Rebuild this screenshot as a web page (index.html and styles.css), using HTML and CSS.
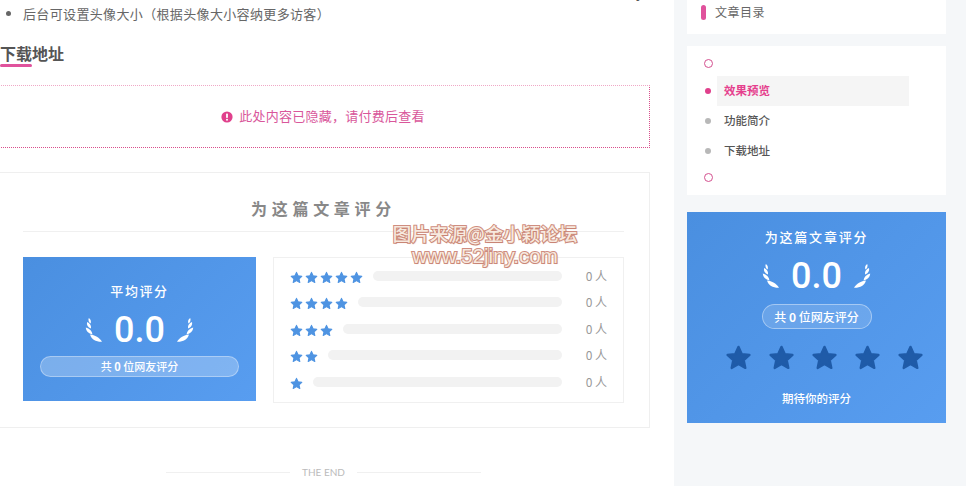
FILE: index.html
```html
<!DOCTYPE html>
<html lang="zh-CN">
<head>
<meta charset="utf-8">
<title>下载地址</title>
<link rel="stylesheet" href="styles.css">
</head>
<body>
<svg class="defs" width="0" height="0" aria-hidden="true">
  <symbol id="star" viewBox="0 0 24 24">
    <polygon points="12,2.5 14.9,8.9 21.8,9.7 16.7,14.4 18.1,21.3 12,17.8 5.9,21.3 7.3,14.4 2.2,9.7 9.1,8.9" fill="currentColor" stroke="currentColor" stroke-width="2" stroke-linejoin="round"/>
  </symbol>
  <symbol id="laurel" viewBox="0 0 17 24">
    <path fill="#fff" d="M17 23.8C11 24 6.5 21.5 5 16.5 10 17 14.5 19.5 17 23.8Z"/>
    <path fill="#fff" d="M7.5 16.5C3.5 15.5 1 13 .8 9.5 4.5 10.5 7 13 7.5 16.5Z"/>
    <path fill="#fff" d="M6 10.5C3 9.5 1.4 7 2 4 4.8 5 6.4 7.5 6 10.5Z"/>
    <path fill="#fff" d="M5.6 5.5C3.6 4.3 3 2.2 3.8 0 5.6 1.2 6.4 3.3 5.6 5.5Z"/>
  </symbol>
</svg>
<div class="page">
  <main class="main">
    <p class="prev-line">y</p>
    <ul class="features">
      <li>后台可设置头像大小（根据头像大小容纳更多访客）</li>
    </ul>
    <h2 class="section-title">下载地址</h2>
    <div class="hidden-box">
      <svg class="alert-icon" viewBox="0 0 12 12" aria-hidden="true">
        <circle cx="6" cy="6" r="5.6" fill="#e0408c"/>
        <rect x="5.1" y="2.4" width="1.8" height="4.6" rx=".7" fill="#fff"/>
        <circle cx="6" cy="8.8" r="1" fill="#fff"/>
      </svg>
      <span>此处内容已隐藏，请付费后查看</span>
    </div>
    <section class="rate-card">
      <h3 class="rate-title">为这篇文章评分</h3>
      <div class="rate-body">
        <div class="score-box">
          <div class="score-label">平均评分</div>
          <div class="score-row">
            <svg class="laurel"><use href="#laurel"/></svg>
            <span class="score-num">0.0</span>
            <svg class="laurel flip"><use href="#laurel"/></svg>
          </div>
          <div class="score-pill">共 <b>0</b> 位网友评分</div>
        </div>
        <div class="rate-list">
          <div class="rate-row">
            <span class="mini-stars"><svg><use href="#star"/></svg><svg><use href="#star"/></svg><svg><use href="#star"/></svg><svg><use href="#star"/></svg><svg><use href="#star"/></svg></span>
            <span class="bar"></span><span class="count">0 人</span>
          </div>
          <div class="rate-row">
            <span class="mini-stars"><svg><use href="#star"/></svg><svg><use href="#star"/></svg><svg><use href="#star"/></svg><svg><use href="#star"/></svg></span>
            <span class="bar"></span><span class="count">0 人</span>
          </div>
          <div class="rate-row">
            <span class="mini-stars"><svg><use href="#star"/></svg><svg><use href="#star"/></svg><svg><use href="#star"/></svg></span>
            <span class="bar"></span><span class="count">0 人</span>
          </div>
          <div class="rate-row">
            <span class="mini-stars"><svg><use href="#star"/></svg><svg><use href="#star"/></svg></span>
            <span class="bar"></span><span class="count">0 人</span>
          </div>
          <div class="rate-row">
            <span class="mini-stars"><svg><use href="#star"/></svg></span>
            <span class="bar"></span><span class="count">0 人</span>
          </div>
        </div>
      </div>
    </section>
    <div class="the-end"><i></i><span>THE END</span><i></i></div>
  </main>
  <aside class="side">
    <div class="card toc-head"><span class="toc-mark"></span><span class="toc-label">文章目录</span></div>
    <div class="card toc">
      <div class="toc-edge"><span class="ring"></span></div>
      <div class="toc-item active"><span class="dot"></span><span class="toc-text">效果预览</span></div>
      <div class="toc-item"><span class="dot"></span><span class="toc-text">功能简介</span></div>
      <div class="toc-item"><span class="dot"></span><span class="toc-text">下载地址</span></div>
      <div class="toc-edge last"><span class="ring"></span></div>
    </div>
    <div class="side-rate">
      <div class="side-title">为这篇文章评分</div>
      <div class="score-row side-score">
        <svg class="laurel"><use href="#laurel"/></svg>
        <span class="score-num">0.0</span>
        <svg class="laurel flip"><use href="#laurel"/></svg>
      </div>
      <div class="side-pill">共 <b>0</b> 位网友评分</div>
      <div class="big-stars"><svg><use href="#star"/></svg><svg><use href="#star"/></svg><svg><use href="#star"/></svg><svg><use href="#star"/></svg><svg><use href="#star"/></svg></div>
      <div class="side-note">期待你的评分</div>
    </div>
  </aside>
</div>
<div class="watermark">
  <div class="wm-cn">图片来源@金小颖论坛</div>
  <div class="wm-en">www.52jiny.com</div>
</div>
</body>
</html>
```

FILE: styles.css
```css
* { box-sizing: border-box; }
html, body { margin: 0; padding: 0; }
body {
  position: relative;
  width: 966px;
  height: 486px;
  overflow: hidden;
  font-family: "Noto Sans CJK SC", "Noto Sans", sans-serif;
  color: #555;
}
.defs { position: absolute; }
.page {
  display: flex;
  width: 966px;
  height: 486px;
  overflow: hidden;
  background: #f5f7f9;
}
.main {
  flex: 0 0 674px;
  height: 520px;
  margin-top: -19px;
  padding-right: 24px;
  background: #fff;
}
.prev-line {
  margin: 0;
  height: 22px;
  padding-right: 6px;
  text-align: right;
  font: 16px/24px "Liberation Sans", sans-serif;
  color: #555;
}
.features {
  margin: 0;
  padding: 0 0 0 23px;
  font-size: 13px;
  line-height: 22px;
  letter-spacing: .35px;
  color: #666;
}
.section-title {
  position: relative;
  margin: 16px 0 0;
  font-size: 16px;
  line-height: 24px;
  font-weight: 700;
  color: #555;
}
.section-title::after {
  content: "";
  position: absolute;
  left: 0;
  top: 23px;
  width: 32px;
  height: 3px;
  border-radius: 2px;
  background: #e0529c;
}
.hidden-box {
  display: flex;
  align-items: center;
  justify-content: center;
  gap: 6px;
  height: 63px;
  margin: 20px 0 0 -4px;
  padding-bottom: 2px;
  border: 1px dotted #d94f8c;
  border-top-color: #f0a8c6;
  font-size: 13px;
  letter-spacing: .25px;
  color: #d9579b;
}
.alert-icon { width: 12px; height: 12px; flex: none; margin-top: 2px; }
.rate-card {
  height: 256px;
  margin: 24px 0 0 -4px;
  padding: 23px 25px 0 26px;
  border: 1px solid #efefef;
}
.rate-title {
  margin: 0;
  height: 36px;
  border-bottom: 1px solid #f0f0f0;
  font-size: 16px;
  line-height: 24px;
  font-weight: 700;
  letter-spacing: 4.7px;
  text-align: center;
  color: #888;
}
.rate-body {
  display: flex;
  align-items: flex-start;
  gap: 17px;
  margin-top: 25px;
}
.score-box {
  flex: 0 0 233px;
  height: 144px;
  padding: 24px 17px 0;
  background: linear-gradient(135deg, #4a8fe0, #589df0);
  color: #fff;
  text-align: center;
}
.score-label {
  font-size: 13px;
  font-weight: 500;
  line-height: 20px;
  letter-spacing: 1.6px;
}
.score-row {
  display: flex;
  align-items: center;
  justify-content: center;
  gap: 12px;
  height: 40px;
  margin-top: 9px;
}
.score-num {
  font: 500 36px/40px Roboto, sans-serif;
  color: #fff;
}
.laurel { width: 17px; height: 24px; }
.flip { transform: scaleX(-1); }
.score-pill {
  height: 21px;
  margin-top: 6px;
  border: 1px solid rgba(255, 255, 255, .35);
  border-radius: 11px;
  background: rgba(255, 255, 255, .25);
  font-size: 11px;
  font-weight: 500;
  line-height: 19px;
}
.rate-list {
  flex: 0 0 351px;
  height: 146px;
  padding: 5px 16px 0;
  border: 1px solid #f0f0f0;
}
.rate-row {
  display: flex;
  align-items: center;
  gap: 10px;
  height: 26.5px;
}
.mini-stars {
  display: flex;
  gap: 2px;
  padding-top: 2px;
  color: #4f94e2;
}
.mini-stars svg { width: 13px; height: 13px; }
.bar {
  flex: 1;
  height: 10px;
  margin-top: -1px;
  border-radius: 5px;
  background: #f2f2f2;
}
.count {
  flex: 0 0 19px;
  margin-left: 14px;
  margin-top: -2px;
  font-size: 12px;
  white-space: nowrap;
  color: #999;
}
.the-end {
  display: flex;
  align-items: center;
  justify-content: center;
  gap: 12px;
  width: 647px;
  margin-top: 36px;
  font: 400 10px/16px Lato, sans-serif;
  color: #bbb;
}
.the-end i {
  width: 124px;
  height: 1px;
  background: #f0f0f0;
}
.side {
  flex: 0 0 292px;
  margin-top: -10px;
  padding: 0 20px 0 13px;
}
.card { background: #fff; }
.toc-head {
  display: flex;
  align-items: center;
  gap: 9px;
  height: 44px;
  padding-left: 14px;
  font-size: 12px;
  letter-spacing: .5px;
  color: #666;
}
.toc-label { margin-top: -2px; }
.toc-mark {
  width: 5px;
  height: 15px;
  border-radius: 3px;
  background: #e0529c;
}
.toc {
  height: 149px;
  margin-top: 12px;
  padding: 4px 0;
}
.toc-edge {
  display: flex;
  align-items: center;
  height: 26px;
  padding-left: 17px;
}
.toc-edge.last { height: 23px; }
.ring {
  width: 9px;
  height: 9px;
  border: 1.5px solid #d4508f;
  border-radius: 50%;
}
.toc-item {
  display: flex;
  align-items: center;
  height: 30px;
  padding-left: 18px;
  font-size: 11.5px;
  font-weight: 500;
  color: #555;
}
.dot {
  width: 6px;
  height: 6px;
  border-radius: 50%;
  background: #b8b8b8;
}
.toc-text {
  display: flex;
  align-items: center;
  width: 192px;
  height: 30px;
  margin-left: 6px;
  padding: 0 0 2px 7px;
}
.active { color: #e5408d; font-weight: 700; }
.active .dot { background: #e0408c; }
.active .toc-text { background: #f5f5f5; }
.side-rate {
  height: 211px;
  margin-top: 17px;
  padding-top: 15px;
  background: linear-gradient(135deg, #4a8fe0, #589df0);
  color: #fff;
  text-align: center;
}
.side-title {
  font-size: 13px;
  font-weight: 500;
  line-height: 20px;
  letter-spacing: 1.8px;
}
.side-score { margin-top: 9px; }
.side-pill {
  width: 110px;
  height: 25px;
  margin: 8px auto 0;
  border: 1px solid rgba(255, 255, 255, .4);
  border-radius: 13px;
  background: rgba(255, 255, 255, .15);
  font-size: 12px;
  font-weight: 500;
  line-height: 23px;
}
.big-stars {
  display: flex;
  justify-content: center;
  gap: 16px;
  margin-top: 15px;
  padding-left: 16px;
  color: #1f5ba8;
}
.big-stars svg { width: 27px; height: 27px; }
.side-note {
  margin-top: 17px;
  font-size: 11.5px;
  font-weight: 500;
  line-height: 20px;
}
.watermark {
  position: absolute;
  left: 380px;
  top: 221px;
  width: 210px;
  text-align: center;
  color: #f7e9df;
  -webkit-text-stroke: 2px #cf8d80;
  paint-order: stroke fill;
  text-shadow: 1px 1px 1px rgba(190, 120, 100, .45);
}
.wm-cn { font-size: 18.5px; font-weight: 500; line-height: 24px; }
.wm-en { font: 20.5px/22px "Liberation Sans", sans-serif; }
```
